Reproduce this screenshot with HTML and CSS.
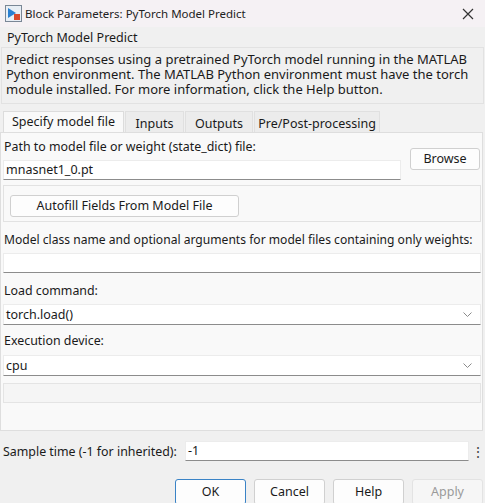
FILE: index.html
```html
<!DOCTYPE html>
<html>
<head>
<meta charset="utf-8">
<link rel="stylesheet" href="styles.css">
</head>
<body>
<div class="window">
  <div class="titlebar">
    <svg class="app-icon" width="17" height="17" viewBox="0 0 17 17">
      <rect x="0.5" y="0.5" width="16" height="16" fill="#e8eef5" stroke="#7a8796"/>
      <path d="M3 3 L11 8 L3 13 Z" fill="#2a7fd0"/>
      <rect x="9" y="9" width="6" height="6" fill="#d9482b"/>
    </svg>
    <span class="title-text">Block Parameters: PyTorch Model Predict</span>
    <svg class="close-icon" width="12" height="12" viewBox="0 0 12 12">
      <path d="M1 1 L11 11 M11 1 L1 11" stroke="#333" stroke-width="1.2" fill="none"/>
    </svg>
  </div>

  <div class="block-name">PyTorch Model Predict</div>
  <div class="description">Predict responses using a pretrained PyTorch model running in the MATLAB Python environment. The MATLAB Python environment must have the torch module installed. For more information, click the Help button.</div>

  <div class="tabs">
    <div class="tab active">Specify model file</div>
    <div class="tab t-inputs">Inputs</div>
    <div class="tab t-outputs">Outputs</div>
    <div class="tab t-pre">Pre/Post-processing</div>
  </div>

  <div class="panel">
    <div class="path-row">
      <div class="path-col">
        <div class="label">Path to model file or weight (state_dict) file:</div>
        <div class="field path-field">mnasnet1_0.pt</div>
      </div>
      <div class="btn browse">Browse</div>
    </div>

    <div class="group">
      <div class="btn autofill">Autofill Fields From Model File</div>
    </div>

    <div class="label mt-label">Model class name and optional arguments for model files containing only weights:</div>
    <div class="field"></div>

    <div class="label mt-load">Load command:</div>
    <div class="field select"><span>torch.load()</span><svg class="chev" width="9" height="5" viewBox="0 0 9 5"><path d="M0.5 0.5 L4.5 4.5 L8.5 0.5" stroke="#8a8a8a" fill="none" stroke-width="1"/></svg></div>

    <div class="label mt-exec">Execution device:</div>
    <div class="field select"><span>cpu</span><svg class="chev" width="9" height="5" viewBox="0 0 9 5"><path d="M0.5 0.5 L4.5 4.5 L8.5 0.5" stroke="#8a8a8a" fill="none" stroke-width="1"/></svg></div>

    <div class="empty-box"></div>
  </div>

  <div class="sample-row">
    <span class="sample-label">Sample time (-1 for inherited):</span>
    <div class="field sample-field">-1</div>
    <span class="kebab">⋮</span>
  </div>

  <div class="buttons">
    <div class="btn dlg ok">OK</div>
    <div class="btn dlg">Cancel</div>
    <div class="btn dlg">Help</div>
    <div class="btn dlg disabled">Apply</div>
  </div>
</div>
</body>
</html>
```

FILE: styles.css
```css
* { box-sizing: border-box; }
html, body {
  margin: 0;
  padding: 0;
}
body {
  width: 485px;
  height: 503px;
  overflow: hidden;
  background: #f0f0f0;
  font-family: "Noto Sans", "Open Sans", sans-serif;
  font-size: 12.4px;
  color: #1a1a1a;
}
.window {
  width: 485px;
  height: 503px;
  overflow: hidden;
  background: #f0f0f0;
}
.titlebar {
  height: 27px;
  background: #f5f1f4;
  display: flex;
  align-items: center;
  padding-left: 5px;
  padding-right: 11px;
}
.app-icon { flex: none; }
.title-text {
  margin-left: 3px;
  font-size: 11.5px;
  color: #222;
  flex: 1;
  white-space: nowrap;
}
.close-icon { flex: none; }

.block-name {
  margin-top: 2px;
  height: 17px;
  line-height: 17px;
  padding-left: 7px;
  font-size: 12.5px;
}
.description {
  margin: 1px 1px 0 1px;
  border: 1px solid #e2e2e2;
  padding: 4px 4px 5px 4px;
  line-height: 15px;
  font-size: 13px;
  height: 57px;
}

.tabs {
  margin-top: 7px;
  display: flex;
  padding-left: 3px;
  height: 21px;
}
.tab {
  height: 21px;
  line-height: 23px;
  background: #ececec;
  border: 1px solid #e0e0e0;
  border-bottom: none;
  margin-right: 1px;
  font-size: 12.5px;
  text-align: center;
  white-space: nowrap;
}
.tab.active {
  background: #f9f9f9;
  border-color: #dcdcdc;
  width: 121px;
  line-height: 20px;
}
.t-inputs { width: 59px; }
.t-outputs { width: 68px; }
.t-pre { width: 126px; }

.panel {
  height: 299px;
  background: #f9f9f9;
  border: 1px solid #dedede;
  margin: 0 2px 0 0;
  padding: 6px 1px 0 2px;
}
.label {
  height: 16px;
  line-height: 16px;
  padding-left: 1px;
  white-space: nowrap;
}
.path-row {
  display: flex;
  align-items: flex-start;
}
.path-col {
  width: 398px;
}
.field {
  height: 20px;
  background: #ffffff;
  border-bottom: 1px solid #8c8c8c;
  border-top: 1px solid #ececec;
  border-left: 1px solid #ececec;
  border-right: 1px solid #ececec;
  line-height: 18px;
  padding-left: 2px;
  font-size: 12.5px;
}
.path-field {
  margin-top: 5px;
}
.btn {
  background: #fdfdfd;
  border: 1px solid #d0d0d0;
  border-radius: 3px;
  text-align: center;
  font-size: 12.5px;
  white-space: nowrap;
}
.browse {
  margin-left: 9px;
  margin-top: 9px;
  width: 70px;
  height: 22px;
  line-height: 20px;
}
.group {
  margin-top: 5px;
  height: 37px;
  border: 1px solid #e2e2e2;
  padding: 9px 0 0 6px;
}
.autofill {
  width: 229px;
  height: 22px;
  line-height: 20px;
}
.mt-label { margin-top: 10px; margin-bottom: 5px; font-size: 12.1px; }
.mt-load { margin-top: 10px; margin-bottom: 5px; }
.mt-exec { margin-top: 8px; margin-bottom: 6px; }
.select {
  display: flex;
  align-items: center;
  justify-content: space-between;
  padding-right: 8px;
  height: 21px;
}
.chev { flex: none; }
.empty-box {
  margin-top: 7px;
  height: 20px;
  border: 1px solid #e4e4e4;
  background: #f5f5f5;
}

.sample-row {
  display: flex;
  align-items: center;
  margin-top: 10px;
  height: 20px;
  padding-left: 3px;
}
.sample-label {
  width: 182px;
  white-space: nowrap;
}
.sample-field {
  width: 284px;
  height: 20px;
}
.kebab {
  margin-left: 2px;
  font-size: 14px;
  width: 10px;
  text-align: center;
  color: #444;
}

.buttons {
  display: flex;
  justify-content: flex-end;
  margin-top: 18px;
  padding-right: 2px;
  gap: 8px;
}
.dlg {
  width: 71px;
  height: 26px;
  line-height: 24px;
}
.ok {
  border-color: #3a83c6;
}
.disabled {
  color: #9a9a9a;
  background: #f6f6f6;
  border-color: #e3e3e3;
}
```
